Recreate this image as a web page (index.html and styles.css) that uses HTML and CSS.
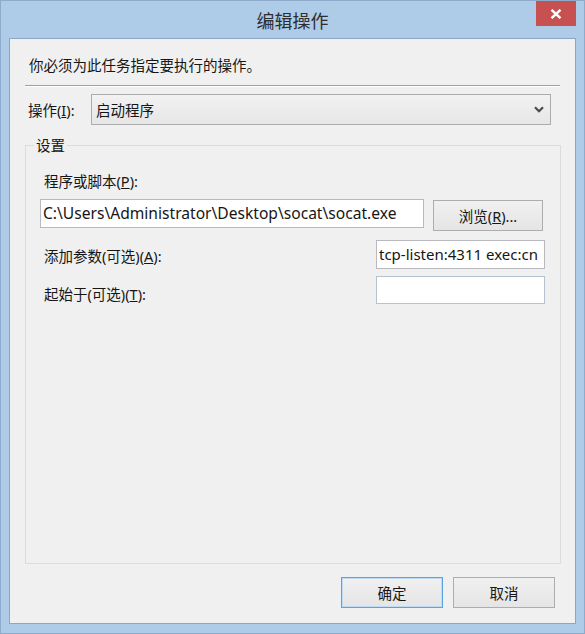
FILE: index.html
```html
<!DOCTYPE html>
<html lang="zh-CN">
<head>
<meta charset="utf-8">
<title>编辑操作</title>
<link rel="stylesheet" href="styles.css">
</head>
<body>
<div class="window">
  <div class="titlebar">
    <span class="title">编辑操作</span>
    <button class="close" aria-label="关闭">
      <svg width="12" height="10" viewBox="0 0 12 10"><path d="M1.5 0.8 L10.5 9.2 M10.5 0.8 L1.5 9.2" stroke="#fff" stroke-width="2.4" fill="none"/></svg>
    </button>
  </div>
  <div class="client">
    <p class="desc">你必须为此任务指定要执行的操作。</p>
    <div class="sep"></div>
    <div class="action-row">
      <span class="action-label">操作(<u>I</u>):</span>
      <div class="combo">
        <span>启动程序</span>
        <svg class="chev" width="10" height="7" viewBox="0 0 10 7"><path d="M1 1.2 L5 5.2 L9 1.2" stroke="#4a4a4a" stroke-width="2.2" fill="none"/></svg>
      </div>
    </div>
    <fieldset class="group">
      <legend>设置</legend>
      <div class="field-label">程序或脚本(<u>P</u>):</div>
      <div class="path-row">
        <div class="input path">C:\Users\Administrator\Desktop\socat\socat.exe</div>
        <button class="btn browse">浏览(<u>R</u>)...</button>
      </div>
      <div class="param-row args">
        <span class="param-label">添加参数(可选)(<u>A</u>):</span>
        <div class="input short">tcp-listen:4311 exec:cn</div>
      </div>
      <div class="param-row start">
        <span class="param-label">起始于(可选)(<u>T</u>):</span>
        <div class="input short empty"></div>
      </div>
    </fieldset>
    <div class="footer">
      <button class="btn default">确定</button>
      <button class="btn">取消</button>
    </div>
  </div>
</div>
</body>
</html>
```

FILE: styles.css
```css
html, body {
  margin: 0;
  padding: 0;
  background: #aecbe8;
}

.window {
  width: 585px;
  height: 634px;
  box-sizing: border-box;
  border: 1px solid #8eabcb;
  background: #aecbe8;
  display: flex;
  flex-direction: column;
  font-family: "Noto Sans", "Noto Sans CJK SC", sans-serif;
  font-size: 14.5px;
  color: #161616;
}

.titlebar {
  height: 37px;
  flex: none;
  display: grid;
  grid-template-columns: 1fr auto 1fr;
  align-items: start;
}

.title {
  grid-column: 2;
  font-family: "Noto Sans CJK SC", sans-serif;
  font-size: 18px;
  line-height: 24px;
  margin-top: 7px;
  color: #2e2e2e;
}

.close {
  grid-column: 3;
  justify-self: end;
  width: 40px;
  height: 25px;
  margin: 0 8px 0 0;
  padding: 0;
  border: none;
  background: #c75050;
  display: flex;
  align-items: center;
  justify-content: center;
}

.client {
  flex: none;
  margin: 0 8px;
  height: 586px;
  box-sizing: border-box;
  border: 1px solid #8fa6c0;
  background: #f0f0f0;
  display: flex;
  flex-direction: column;
}

.desc {
  margin: 16px 0 0 19px;
  line-height: 20px;
}

.sep {
  margin: 10px 0 0 15px;
  width: 535px;
  height: 0;
  border-top: 1px solid #a0a0a0;
  border-bottom: 1px solid #ffffff;
}

.action-row {
  margin-top: 7px;
  padding-left: 18px;
  display: flex;
  align-items: center;
}

.action-label {
  width: 63px;
  line-height: 20px;
}

.combo {
  width: 460px;
  height: 31px;
  box-sizing: border-box;
  border: 1px solid #acacac;
  background: linear-gradient(#f2f2f2, #e6e6e6);
  display: flex;
  align-items: center;
  justify-content: space-between;
  padding: 0 6px 0 4px;
}

.chev {
  display: block;
}

.group {
  flex: 1;
  margin: 10px 0 0 15px;
  width: 536px;
  box-sizing: border-box;
  border: 1px solid #dcdcdc;
  padding: 0 15px 0 14px;
  min-width: 0;
}

.group legend {
  margin-left: -6px;
  padding: 0 2px;
  line-height: 20px;
}

.field-label {
  margin: 16px 0 0 4px;
  line-height: 20px;
}

.path-row {
  margin-top: 8px;
  display: flex;
  align-items: flex-start;
}

.input {
  box-sizing: border-box;
  background: #ffffff;
  border: 1px solid #b8babf;
  white-space: nowrap;
  overflow: hidden;
  padding: 0 2px;
  line-height: 27px;
}

.path {
  width: 384px;
  height: 29px;
  font-size: 15.6px;
  padding-left: 2px;
}

.btn {
  font: inherit;
  color: #161616;
  box-sizing: border-box;
  border: 1px solid #adadad;
  background: linear-gradient(#f0f0f0, #e5e5e5);
  padding: 0;
  height: 31px;
  line-height: 20px;
}

.browse {
  width: 110px;
  margin: 1px 1px 0 9px;
}

.param-row {
  display: flex;
  align-items: flex-start;
  justify-content: space-between;
}

.param-label {
  margin-left: 4px;
  line-height: 20px;
}

.args {
  margin-top: 9px;
}

.args .param-label {
  margin-top: 6px;
}

.start {
  margin-top: 7px;
}

.start .param-label {
  margin-top: 8px;
}

.short {
  width: 169px;
  height: 29px;
  padding: 0 1px 0 2px;
  font-size: 15px;
}

.empty {
  height: 28px;
  border-color: #b6c2d0;
}

.footer {
  flex: none;
  margin: 13px 0 15px 0;
  padding-right: 20px;
  display: flex;
  justify-content: flex-end;
  gap: 10px;
}

.footer .btn {
  width: 102px;
}

.footer .default {
  border-color: #5aa2e8;
  box-shadow: inset 0 0 0 1px #bfdcf7;
}
```
